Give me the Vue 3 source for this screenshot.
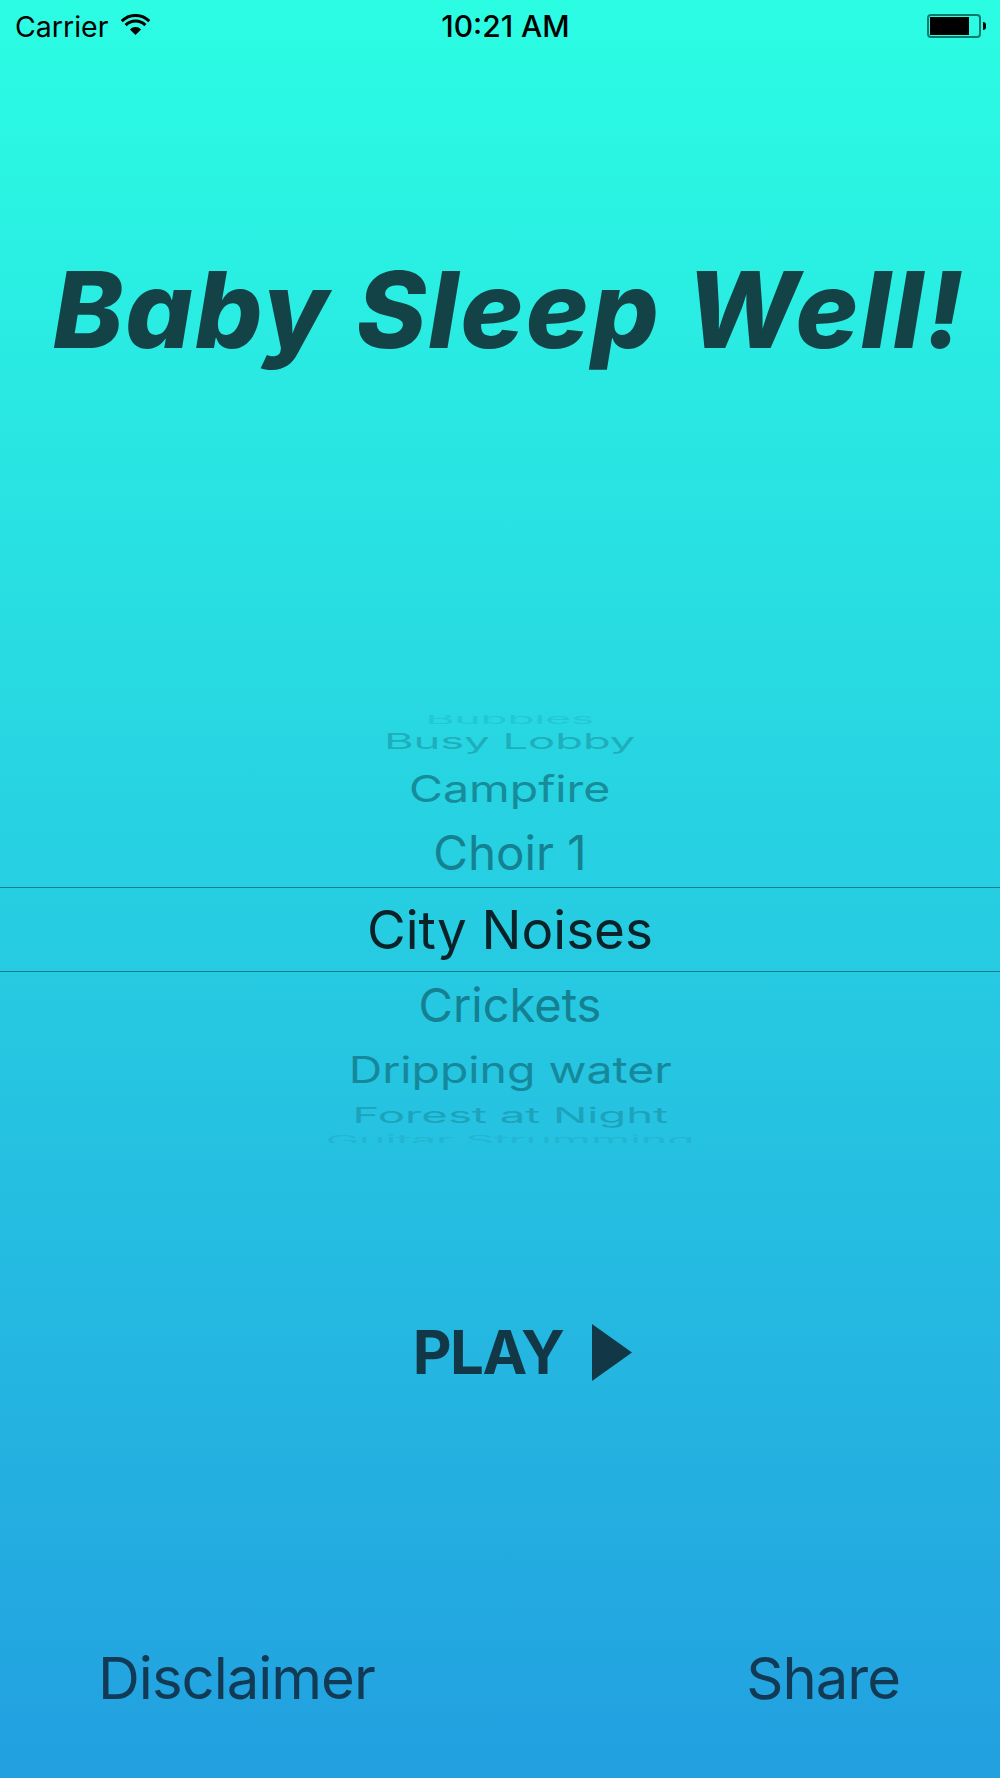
<script setup>
const above = [
  { name: 'Bubbles', cls: 'w1' },
  { name: 'Busy Lobby', cls: 'w2' },
  { name: 'Campfire', cls: 'w3' },
  { name: 'Choir 1', cls: 'w4' },
]
const below = [
  { name: 'Crickets', cls: 'w5' },
  { name: 'Dripping water', cls: 'w6' },
  { name: 'Forest at Night', cls: 'w7' },
  { name: 'Guitar Strumming', cls: 'w8' },
]
</script>

<template>
  <div class="screen">
    <div class="status-bar">
      <div class="status-left">
        <span>Carrier</span>
        <svg class="wifi" width="29" height="21" viewBox="0 0 29 21">
          <path d="M14.5 21 L8.9 15.4 A8 8 0 0 1 20.1 15.4 Z" fill="#000" />
          <path d="M4.6 11.1 A14 14 0 0 1 24.4 11.1" fill="none" stroke="#000" stroke-width="3" />
          <path d="M0.7 7.2 A19.5 19.5 0 0 1 28.3 7.2" fill="none" stroke="#000" stroke-width="3" />
        </svg>
      </div>
      <div class="status-time">10:21 AM</div>
      <div class="battery">
        <div class="battery-body"><div class="battery-fill"></div></div>
        <div class="battery-tip"></div>
      </div>
    </div>

    <h1 class="title">Baby Sleep Well!</h1>

    <div class="picker">
      <div v-for="item in above" :key="item.name" class="row" :class="item.cls"><span>{{ item.name }}</span></div>
      <div class="row selected"><span>City Noises</span></div>
      <div v-for="item in below" :key="item.name" class="row" :class="item.cls"><span>{{ item.name }}</span></div>
    </div>

    <div class="play">
      <span>PLAY</span>
      <svg width="40" height="57" viewBox="0 0 40 57"><path d="M0 0 L40 28.5 L0 57 Z" fill="#123847" /></svg>
    </div>

    <div class="footer">
      <span>Disclaimer</span>
      <span>Share</span>
    </div>
  </div>
</template>

<style scoped>
.screen {
  width: 1000px;
  height: 1778px;
  overflow: hidden;
  display: flex;
  flex-direction: column;
  background: linear-gradient(180deg, #2bfde3 0%, #22a0e0 100%);
  font-family: Inter, "Liberation Sans", sans-serif;
}

.status-bar {
  height: 52px;
  padding: 0 14px 0 15px;
  display: grid;
  grid-template-columns: 1fr auto 1fr;
  align-items: center;
  color: #000;
  font-size: 28.5px;
  box-sizing: border-box;
}

.status-left {
  display: flex;
  align-items: center;
  gap: 13px;
}

.wifi {
  margin-top: -4px;
}

.status-time {
  margin-left: 10px;
  font-size: 30px;
  font-weight: 500;
}

.battery {
  justify-self: end;
  display: flex;
  align-items: center;
}

.battery-body {
  width: 54px;
  height: 24px;
  border: 2px solid #0b7a6e;
  border-radius: 4px;
  padding: 1px;
  box-sizing: border-box;
}

.battery-fill {
  width: 39px;
  height: 100%;
  background: #000;
}

.battery-tip {
  width: 3px;
  height: 8px;
  margin-left: 2px;
  background: #000;
  border-radius: 0 4px 4px 0;
}

.title {
  margin: 190px 0 0;
  padding-left: 18px;
  text-align: center;
  font-family: Inter, "Open Sans", sans-serif;
  font-size: 106px;
  line-height: 136px;
  letter-spacing: 2.2px;
  font-weight: 800;
  font-style: italic;
  color: #134347;
  white-space: nowrap;
}

.picker {
  margin-top: 337px;
  height: 428px;
  overflow: hidden;
  display: flex;
  flex-direction: column;
}

.row {
  flex-shrink: 0;
  padding-left: 20px;
  display: flex;
  justify-content: center;
  align-items: center;
  font-size: 46px;
  color: #127484;
  white-space: nowrap;
  box-sizing: border-box;
}

.row span {
  display: block;
}

.w1 { height: 8px; opacity: 0.15; }
.w1 span { transform: scale(0.96, 0.28); }
.w2 { height: 36px; opacity: 0.4; }
.w2 span { transform: scale(0.985, 0.46); }
.w3 { height: 58px; opacity: 0.75; }
.w3 span { transform: scale(1.01, 0.8); }
.w4 { height: 70px; font-size: 47.5px; opacity: 0.85; }
.w5 { height: 64px; font-size: 47px; opacity: 0.85; }
.w6 { height: 66px; opacity: 0.75; }
.w6 span { transform: scale(1.008, 0.8); }
.w7 { height: 26px; opacity: 0.4; }
.w7 span { transform: scale(0.99, 0.46); }
.w8 { height: 24px; opacity: 0.15; }
.w8 span { transform: scale(0.97, 0.28); }

.selected {
  height: 85px;
  font-size: 53px;
  color: #0a2228;
  border-top: 1px solid rgba(15, 90, 105, 0.7);
  border-bottom: 1px solid rgba(15, 90, 105, 0.7);
}

.play {
  margin-top: 173px;
  padding-left: 45px;
  display: flex;
  justify-content: center;
  align-items: center;
  gap: 29px;
  font-size: 60px;
  font-weight: 700;
  letter-spacing: -1.5px;
  color: #123847;
}

.footer {
  margin-top: auto;
  margin-bottom: 65px;
  padding: 0 100px 0 98px;
  display: flex;
  justify-content: space-between;
  font-size: 58px;
  letter-spacing: -1px;
  color: #123a55;
}
</style>
